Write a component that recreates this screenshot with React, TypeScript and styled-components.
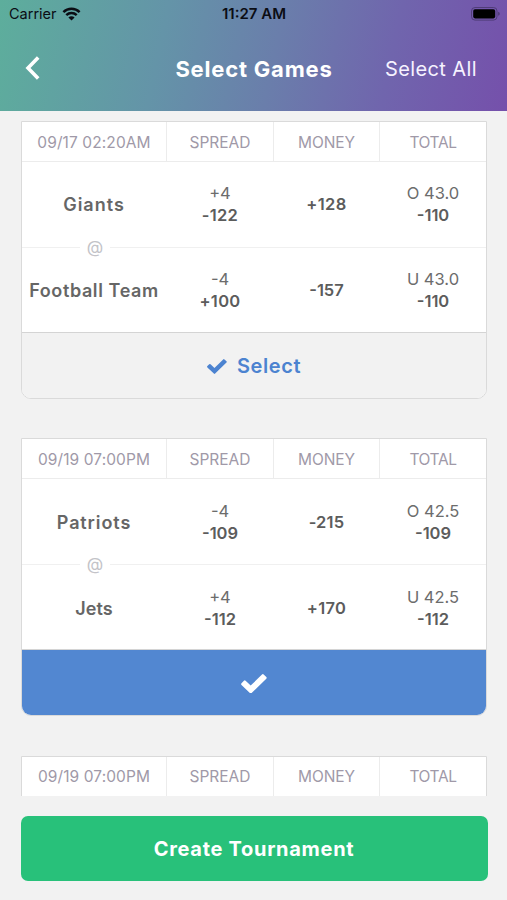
import React from 'react';
import styled, { createGlobalStyle } from 'styled-components';

const GlobalStyle = createGlobalStyle`
  * { box-sizing: border-box; }
  body { margin: 0; background: #f2f2f2; font-family: Inter, "Liberation Sans", sans-serif; }
  button { font-family: inherit; cursor: pointer; border: 0; background: none; padding: 0; }
`;

const Screen = styled.div`
  width: 100%;
  height: 100vh;
  display: flex;
  flex-direction: column;
  overflow: hidden;
  background: #f2f2f2;
`;

const Header = styled.header`
  flex: none;
  height: 111px;
  background: linear-gradient(102deg, #5dae9c 0%, #6494a8 32%, #6a7eab 54%, #7065ad 76%, #7550ab 100%);
`;

const StatusBar = styled.div`
  height: 27px;
  padding: 0 6px 0 9px;
  display: grid;
  grid-template-columns: 1fr auto 1fr;
  align-items: center;
  color: #0b0d14;
`;

const Carrier = styled.span`
  display: flex;
  align-items: center;
  gap: 5px;
  font-size: 14.5px;
`;

const Clock = styled.span`
  font-size: 15px;
  font-weight: 600;
  margin-right: 2px;
`;

const BatterySlot = styled.span`
  display: flex;
  justify-content: flex-end;
`;

const NavBar = styled.nav`
  height: 83px;
  padding: 0 30px 1px 25px;
  display: grid;
  grid-template-columns: 1fr auto 1fr;
  align-items: center;
  color: #fff;
`;

const BackButton = styled.button`
  display: flex;
  justify-self: start;
  color: #fff;
`;

const Title = styled.h1`
  margin: 1px 0 0 6px;
  font-size: 22px;
  font-weight: 700;
  letter-spacing: 0.8px;
`;

const SelectAll = styled.button`
  justify-self: end;
  padding-top: 1px;
  color: #f6f2ff;
  font-size: 20px;
  letter-spacing: 0.4px;
`;

const GameList = styled.main`
  flex: none;
  height: 685px;
  padding: 10px 20px 0 21px;
  overflow: hidden;
  display: flex;
  flex-direction: column;
  gap: 39.4px;
`;

const Card = styled.article`
  flex: none;
  height: 278px;
  border: 1px solid #dadada;
  border-radius: 0 0 10px 10px;
  overflow: hidden;
  background: #fff;
`;

const Row = styled.div`
  display: grid;
  grid-template-columns: 144px 107px 106px 1fr;
`;

const HeadRow = styled(Row)`
  height: 40px;
  border-bottom: 1px solid #ececec;
`;

const HeadCell = styled.div<{ $tracking: number }>`
  display: flex;
  align-items: center;
  justify-content: center;
  padding-top: 1px;
  color: #a099a8;
  font-size: 15.5px;
  letter-spacing: ${(p) => p.$tracking}px;
  & + & { border-left: 1px solid #ececec; }
`;

const TeamRow = styled(Row)<{ $inset: number }>`
  height: 84.5px;
  padding-top: ${(p) => p.$inset}px;
`;

const Team = styled.div<{ $tracking: number }>`
  display: flex;
  align-items: center;
  justify-content: center;
  color: #666;
  font-size: 18px;
  font-weight: 600;
  white-space: nowrap;
  letter-spacing: ${(p) => p.$tracking}px;
`;

const Odds = styled.div`
  display: flex;
  flex-direction: column;
  align-items: center;
  justify-content: center;
  color: #6c6c6c;
  font-size: 16.5px;
  line-height: 22px;
  padding: 0 0 1px 1px;
`;

const Price = styled.strong<{ $tracking: number }>`
  font-weight: 600;
  color: #5c5c5c;
  letter-spacing: ${(p) => p.$tracking}px;
`;

const Divider = styled.div`
  height: 1px;
  display: grid;
  grid-template-columns: 58px 30px 1fr;
  align-items: center;
  justify-items: center;
  color: #c3c3c8;
  font-size: 17px;
  line-height: 1px;
  &::before, &::after {
    content: "";
    width: 100%;
    height: 1px;
    background: #f0f0f0;
  }
`;

const CardAction = styled.button<{ $selected: boolean }>`
  width: 100%;
  height: 66px;
  display: flex;
  align-items: center;
  justify-content: center;
  gap: 10px;
  padding-top: 1px;
  border-top: 1px solid #d4d4d4;
  background: ${(p) => (p.$selected ? '#5287d1' : '#f2f2f2')};
  color: ${(p) => (p.$selected ? '#fff' : '#4c83d0')};
  font-size: 20px;
  font-weight: 600;
  letter-spacing: 0.6px;
`;

const Footer = styled.footer`
  padding: 20px 19.5px 0 20.5px;
`;

const CreateButton = styled.button`
  width: 100%;
  height: 64.5px;
  padding-top: 1px;
  border-radius: 7px;
  background: #28c17a;
  color: #fff;
  font-size: 20px;
  font-weight: 700;
  letter-spacing: 0.7px;
`;

function WifiIcon() {
  return (
    <svg width="19" height="14" viewBox="0 0 18 14" fill="none" stroke="currentColor" strokeWidth="2.5">
      <path d="M0.9 5.1a11.7 11.7 0 0 1 16.2 0" />
      <path d="M3.8 8.2a7.5 7.5 0 0 1 10.4 0" />
      <path d="M9 13.6L5.9 10.5a4.4 4.4 0 0 1 6.2 0z" fill="currentColor" stroke="none" />
    </svg>
  );
}

function BatteryIcon() {
  return (
    <svg width="30" height="14" viewBox="0 0 30 14">
      <rect x="0.5" y="0.5" width="25.5" height="12.6" rx="3.5" fill="none" stroke="#443468" strokeOpacity="0.75" />
      <rect x="2.2" y="2.2" width="22" height="9.2" rx="1.8" fill="#000" />
      <path d="M27.3 4.8c1.8.6 1.8 3.4 0 4z" fill="#443468" />
    </svg>
  );
}

function BackIcon() {
  return (
    <svg width="15" height="24" viewBox="0 0 15 24" fill="none" stroke="currentColor" strokeWidth="3.6">
      <path d="M13.2 1.4L3 12l10.2 10.6" />
    </svg>
  );
}

function CheckIcon({ width }: { width: number }) {
  return (
    <svg width={width} height={width * 0.75} viewBox="0 0 26 19.5" fill="currentColor">
      <path d="M.5 10.9a1.2 1.2 0 0 1 0-1.7l2.4-2.4a1.2 1.2 0 0 1 1.7 0L9.7 11.6 21 .5a1.2 1.2 0 0 1 1.7 0l2.6 2.5a1.2 1.2 0 0 1 0 1.7L10.6 19a1.2 1.2 0 0 1-1.7 0z" />
    </svg>
  );
}

type Line = { label?: string; price: string; tracking?: number };
type Side = { name: string; tracking: number; odds: Line[] };
type Game = { date: string; selected: boolean; away?: Side; home?: Side };

const games: Game[] = [
  {
    date: '09/17 02:20AM',
    selected: false,
    away: {
      name: 'Giants', tracking: 1,
      odds: [{ label: '+4', price: '-122', tracking: 0.3 }, { price: '+128', tracking: 0.4 }, { label: 'O 43.0', price: '-110' }],
    },
    home: {
      name: 'Football Team', tracking: 0.6,
      odds: [{ label: '-4', price: '+100', tracking: 0.3 }, { price: '-157' }, { label: 'U 43.0', price: '-110' }],
    },
  },
  {
    date: '09/19 07:00PM',
    selected: true,
    away: {
      name: 'Patriots', tracking: 0.9,
      odds: [{ label: '-4', price: '-109' }, { price: '-215', tracking: 0.2 }, { label: 'O 42.5', price: '-109' }],
    },
    home: {
      name: 'Jets', tracking: 0.1,
      odds: [{ label: '+4', price: '-112' }, { price: '+170', tracking: 0.3 }, { label: 'U 42.5', price: '-112' }],
    },
  },
  { date: '09/19 07:00PM', selected: false },
];

function SideRow({ side, inset }: { side: Side; inset: number }) {
  return (
    <TeamRow $inset={inset}>
      <Team $tracking={side.tracking}>{side.name}</Team>
      {side.odds.map((o, i) => (
        <Odds key={i}>
          {o.label && <span>{o.label}</span>}
          <Price $tracking={o.tracking ?? 0}>{o.price}</Price>
        </Odds>
      ))}
    </TeamRow>
  );
}

function GameCard({ game }: { game: Game }) {
  return (
    <Card>
      <HeadRow>
        <HeadCell $tracking={0.1}>{game.date}</HeadCell>
        <HeadCell $tracking={0}>SPREAD</HeadCell>
        <HeadCell $tracking={-0.1}>MONEY</HeadCell>
        <HeadCell $tracking={-0.4}>TOTAL</HeadCell>
      </HeadRow>
      {game.away && game.home && (
        <>
          <SideRow side={game.away} inset={0.8} />
          <Divider>@</Divider>
          <SideRow side={game.home} inset={2.4} />
          <CardAction $selected={game.selected}>
            <CheckIcon width={game.selected ? 26 : 20} />
            {!game.selected && 'Select'}
          </CardAction>
        </>
      )}
    </Card>
  );
}

export default function App() {
  return (
    <Screen>
      <GlobalStyle />
      <Header>
        <StatusBar>
          <Carrier>Carrier <WifiIcon /></Carrier>
          <Clock>11:27 AM</Clock>
          <BatterySlot><BatteryIcon /></BatterySlot>
        </StatusBar>
        <NavBar>
          <BackButton aria-label="Back"><BackIcon /></BackButton>
          <Title>Select Games</Title>
          <SelectAll>Select All</SelectAll>
        </NavBar>
      </Header>
      <GameList>
        {games.map((g, i) => <GameCard key={i} game={g} />)}
      </GameList>
      <Footer>
        <CreateButton>Create Tournament</CreateButton>
      </Footer>
    </Screen>
  );
}
